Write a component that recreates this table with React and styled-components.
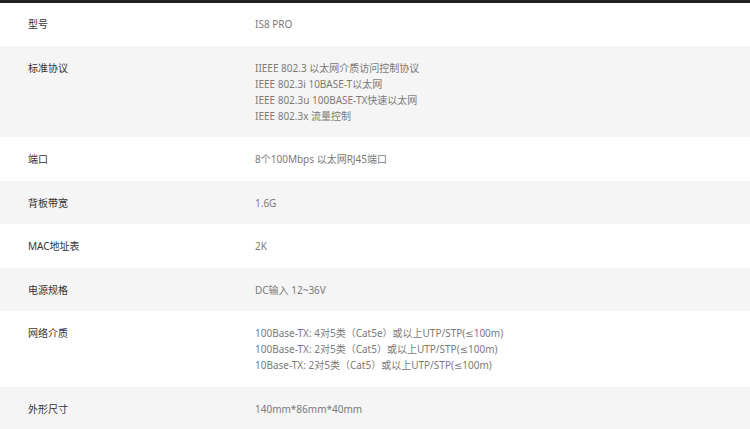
import React from "react";
import styled, { createGlobalStyle } from "styled-components";

const specs = [
  { label: "型号", values: ["IS8 PRO"] },
  {
    label: "标准协议",
    values: [
      "IIEEE 802.3 以太网介质访问控制协议",
      "IEEE 802.3i 10BASE-T以太网",
      "IEEE 802.3u 100BASE-TX快速以太网",
      "IEEE 802.3x 流量控制",
    ],
  },
  { label: "端口", values: ["8个100Mbps 以太网RJ45端口"] },
  { label: "背板带宽", values: ["1.6G"] },
  { label: "MAC地址表", values: ["2K"] },
  { label: "电源规格", values: ["DC输入 12~36V"] },
  {
    label: "网络介质",
    values: [
      "100Base-TX: 4对5类（Cat5e）或以上UTP/STP(≤100m)",
      "100Base-TX: 2对5类（Cat5）或以上UTP/STP(≤100m)",
      "10Base-TX: 2对5类（Cat5）或以上UTP/STP(≤100m)",
    ],
  },
  { label: "外形尺寸", values: ["140mm*86mm*40mm"] },
];

export default function App() {
  return (
    <>
      <GlobalStyle />
      <Page>
        <TopBar />
        <Table>
          {specs.map((row, i) => (
            <Row key={row.label} $shaded={i % 2 === 1} $first={i === 0}>
              <Label>{row.label}</Label>
              <Values>
                {row.values.map((v) => (
                  <Line key={v}>{v}</Line>
                ))}
              </Values>
            </Row>
          ))}
        </Table>
      </Page>
    </>
  );
}

const GlobalStyle = createGlobalStyle`
  html, body {
    margin: 0;
    padding: 0;
    background: #fff;
  }
  body {
    font-family: "Noto Sans", "DejaVu Sans", "Noto Sans CJK SC", sans-serif;
  }
`;

const Page = styled.div`
  width: 750px;
  height: 429px;
  overflow: hidden;
  background: #fff;
`;

const TopBar = styled.div`
  height: 3px;
  background: #222;
`;

const Table = styled.div`
  display: flex;
  flex-direction: column;
`;

// single-line rows come out ~43.5px tall, the first one a touch shorter
const Row = styled.div`
  display: grid;
  grid-template-columns: 227px 1fr;
  padding: ${(p) => (p.$first ? "13px" : "13.75px")} 0 13.75px 28px;
  background: ${(p) => (p.$shaded ? "#f5f5f5" : "#fff")};
  font-size: 10px;
  line-height: 16px;
`;

const Label = styled.div`
  color: #333;
`;

const Values = styled.div`
  display: flex;
  flex-direction: column;
  color: #7a7a7a;
`;

const Line = styled.div`
  white-space: nowrap;
`;
